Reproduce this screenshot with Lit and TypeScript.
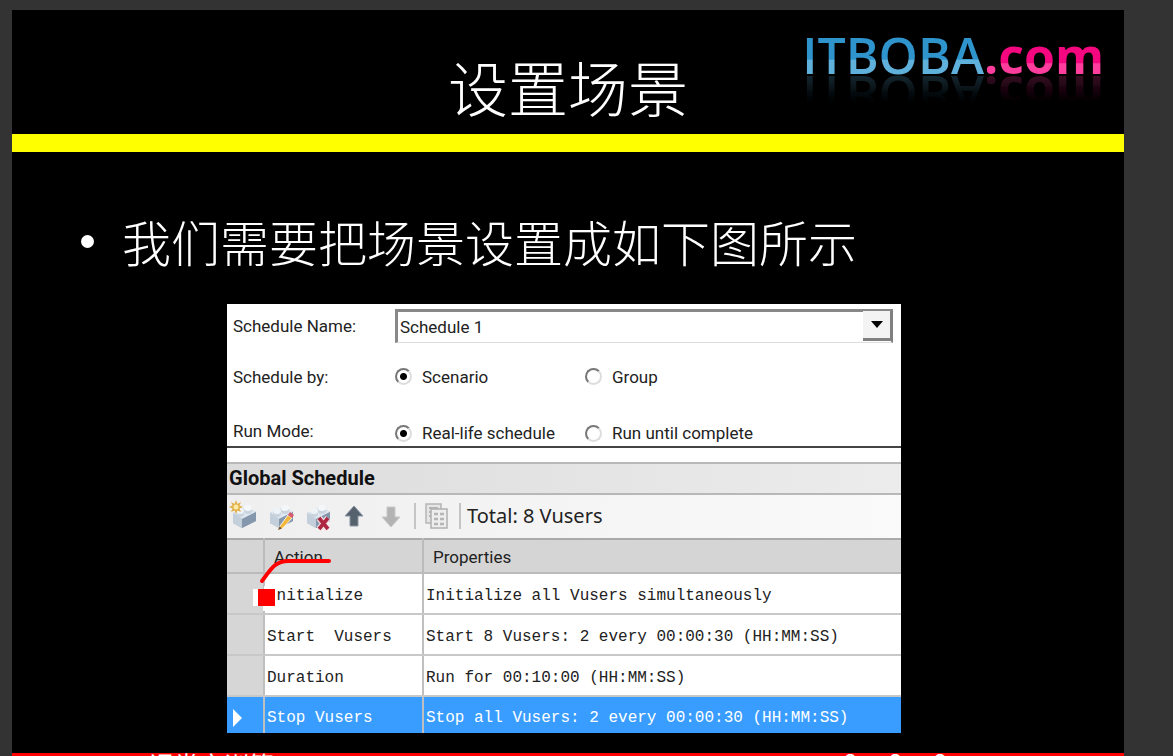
import { LitElement, html, css, svg } from "lit";
import { customElement, state } from "lit/decorators.js";

const block = svg`
  <path d="M4 13 L18 7 L27 12 V21 L13 28 L4 23 Z" fill="#a9b8c8"/>
  <path d="M4 13 L18 7 L27 12 L13 19 Z" fill="#dfe8f0"/>
  <path d="M4 13 L13 19 V28 L4 23 Z" fill="#c3cfdb"/>
  <path d="M13 19 L27 12 V21 L13 28 Z" fill="#8597ad"/>
  <path d="M7 11 V14 A4 3 0 0 0 15 14 V11 M15 8 V11 A4 3 0 0 0 23 11 V8" fill="#c9d4df"/>
  <ellipse cx="11" cy="11" rx="4" ry="3" fill="#eef3f7"/>
  <ellipse cx="19" cy="8" rx="4" ry="3" fill="#f3f7fa"/>`;

const icons = {
  add: svg`${block}
    <path d="M7 0 L8.500 4 L12 2 L10.500 5.500 L14 7 L10.500 8.500 L12 12 L8.500 10.500 L7 14 L5.500 10.500 L2 12 L3.500 8.500 L0 7 L3.500 5.500 L2 2 L5.500 4 Z" fill="#e2b04a"/>
    <circle cx="7" cy="7" r="2.500" fill="#fbe9a8"/>`,
  edit: svg`${block}
    <path d="M14 26 L22 15 L26 18 L17 28 L12 30 Z" fill="#f3b73c" stroke="#fff" stroke-width=".8"/>
    <path d="M22 15 L24 12 L28 15 L26 18 Z" fill="#d6596c"/>
    <path d="M12 30 L13.500 26.500 L16 28.600 Z" fill="#6b4a28"/>`,
  remove: svg`${block}
    <path d="M16 18 L25 29 M25 18 L16 29" stroke="#f2dfe3" stroke-width="6"/>
    <path d="M16 18 L25 29 M25 18 L16 29" stroke="#ad2540" stroke-width="3.600"/>`,
  up: svg`<path d="M14 6 L23 16 H18 V26 H10 V16 H5 Z" fill="#56616e" stroke="#8995a2"/>`,
  down: svg`<path d="M14 27 L23 17 H18 V7 H10 V17 H5 Z" fill="#b3b3b3" stroke="#c8c8c8"/>`,
  copy: svg`
    <rect x="4" y="4" width="15" height="19" fill="#e6e6e6" stroke="#b5b5b5" stroke-width="1.500"/>
    <path d="M7 8 H16 M7 12 H10 M7 16 H10" stroke="#b5b5b5" stroke-width="2"/>
    <rect x="9" y="9" width="16" height="19" fill="#eee" stroke="#b0b0b0" stroke-width="1.500"/>
    <path d="M12 14 H22 M12 19 H22 M12 24 H22" stroke="#b5b5b5" stroke-width="2.500" stroke-dasharray="4 2"/>`,
};

@customElement("app-root")
export class AppRoot extends LitElement {
  @state() private selected = 3;

  private rows = [
    ["Initialize", "Initialize all Vusers simultaneously"],
    ["Start  Vusers", "Start 8 Vusers: 2 every 00:00:30 (HH:MM:SS)"],
    ["Duration", "Run for 00:10:00 (HH:MM:SS)"],
    ["Stop Vusers", "Stop all Vusers: 2 every 00:00:30 (HH:MM:SS)"],
  ];

  static styles = css`
    :host {
      display: block;
      height: 100vh;
      overflow: hidden;
      box-sizing: border-box;
      padding: 10px 49px 0 12px;
      background: #333;
      color: #fff;
      font-family: Roboto, "Liberation Sans", sans-serif;
    }
    * { box-sizing: border-box; }
    .slide { background: #000; }
    .header {
      display: grid;
      grid-template-columns: 1fr auto 1fr;
      height: 142px;
      border-bottom: 18px solid #ff0;
    }
    h1 {
      grid-column: 2;
      margin: 0;
      padding-top: 41px;
      font: 300 60px/70px "Noto Sans CJK SC", sans-serif;
    }
    .logo {
      justify-self: end;
      align-self: start;
      margin: 10px 20px 0 0;
      font: 600 50px/70px "Open Sans", sans-serif;
      -webkit-box-reflect: below -30px linear-gradient(transparent 40%, rgba(255, 255, 255, 0.2) 75%);
    }
    .logo span {
      background: linear-gradient(#2f93cc 56%, #5fb1dc 58%);
      -webkit-background-clip: text;
      color: transparent;
    }
    .logo .tld {
      background: linear-gradient(#f5077f 61%, #ff3d9c 63%);
      -webkit-background-clip: text;
      font-weight: 700;
    }
    .points {
      margin: 0;
      padding: 53px 0 27px 69px;
      list-style: none;
      font: 300 49px/72px "Noto Sans CJK SC", sans-serif;
    }
    .points li { display: flex; align-items: center; gap: 28px; }
    .points li::before {
      content: "";
      width: 13px;
      height: 13px;
      border-radius: 50%;
      background: #fff;
    }
    .body { padding: 0 223px 20px 215px; }
    .panel { position: relative; background: #fff; color: #222; }
    .form {
      display: grid;
      grid-template-columns: 162px 190px 1fr;
      grid-template-rows: 43px 59px 40px;
      align-items: center;
      padding-left: 6px;
      border-bottom: 2px solid #444;
      font-size: 17px;
      line-height: 24px;
    }
    .form > .mode { padding-top: 14px; }
    .form > .caption { padding: 12px 0 2px; }
    .combo { grid-column: 2 / 4; display: grid; margin-right: 8px; }
    .combo > * { grid-area: 1 / 1; }
    select {
      appearance: none;
      width: 100%;
      height: 34px;
      padding: 0 2px;
      border: solid #888;
      border-width: 3px 2px 1px 3px;
      border-bottom-color: #ddd;
      border-radius: 0;
      background: #fff;
      color: #222;
      font: inherit;
    }
    .arrow {
      justify-self: end;
      align-self: center;
      display: grid;
      place-items: center;
      width: 30px;
      height: 30px;
      border: solid #808080;
      border-width: 0 3px 3px 0;
      background: #f3f3f3;
      pointer-events: none;
    }
    .choice { display: flex; align-items: center; gap: 10px; }
    .choice input {
      appearance: none;
      width: 17px;
      height: 17px;
      margin: 0;
      border: 2px solid;
      border-color: #777 #ddd #ddd #777;
      border-radius: 50%;
      background: #fff;
    }
    .choice input:checked { background: radial-gradient(#000 0 3px, #fff 4px); }
    h2 {
      margin: 14px 0 0;
      padding-left: 2px;
      border: solid #b8b8b8;
      border-width: 2px 0;
      background: linear-gradient(90deg, #dcdcdc, #ececec);
      color: #111;
      font-size: 20px;
      line-height: 29px;
    }
    .tools {
      display: flex;
      align-items: center;
      height: 43px;
      padding: 0 0 1px 2px;
      background: linear-gradient(90deg, #efefef, #fafafa);
    }
    .tools button { width: 37px; height: 32px; padding: 0; border: 0; background: none; text-align: left; }
    .tools svg { display: block; }
    .sep { width: 2px; height: 26px; background: #c4c4c4; }
    .sep + button { margin-left: 6px; }
    .total { padding-left: 6px; font: 20px/26px "Noto Sans", sans-serif; }
    table { width: 100%; border-collapse: collapse; table-layout: fixed; border-top: 2px solid #aaa; }
    .c-mark { width: 37px; }
    .c-action { width: 159px; }
    th {
      height: 34px;
      padding: 2px 9px 0;
      border-right: 2px solid #bbb;
      border-bottom: 2px solid #bbb;
      background: #d5d5d5;
      font-size: 17px;
      font-weight: 400;
      text-align: left;
    }
    td {
      height: 41px;
      padding: 4px 0 0 2px;
      border-right: 2px solid #bfbfbf;
      border-bottom: 2px solid #c8c8c8;
      font: 16px/24px "Liberation Mono", monospace;
      white-space: pre;
    }
    th:last-child, td:last-child { border-right: 0; }
    td.mark { padding-left: 6px; background: #d6d6d6; }
    tr.on td { height: 37px; padding-top: 6px; border-bottom: 0; background: #399dff; color: #fff; }
    .mark svg { display: block; }
    .note { position: absolute; left: 25px; top: 250px; }
    .footer {
      display: flex;
      align-items: flex-start;
      justify-content: space-between;
      height: 40px;
      padding: 0 177px 0 137px;
      background: #f00;
      font: 25px/22px "Noto Sans CJK SC", sans-serif;
    }
    .marks { display: flex; gap: 31px; line-height: 16px; }
  `;

  private radio(name: string, label: string, checked = false) {
    return html`<label class="choice ${name}"><input type="radio" name=${name} .checked=${checked} />${label}</label>`;
  }

  private tool(label: string, icon: unknown) {
    return html`<button aria-label=${label}><svg width="32" height="32" viewBox="0 0 32 32" fill="none">${icon}</svg></button>`;
  }

  render() {
    return html`
      <main class="slide">
        <header class="header">
          <h1>设置场景</h1>
          <div class="logo"><span>ITBOBA</span><span class="tld">.com</span></div>
        </header>
        <ul class="points"><li>我们需要把场景设置成如下图所示</li></ul>
        <div class="body">
          <section class="panel">
            <form class="form">
              <label for="name">Schedule Name:</label>
              <div class="combo">
                <select id="name"><option>Schedule 1</option></select>
                <span class="arrow"><svg width="12" height="7"><path d="M0 0H12L6 7Z" /></svg></span>
              </div>
              <span>Schedule by:</span>
              ${this.radio("by", "Scenario", true)} ${this.radio("by", "Group")}
              <span class="caption">Run Mode:</span>
              ${this.radio("mode", "Real-life schedule", true)} ${this.radio("mode", "Run until complete")}
            </form>
            <h2>Global Schedule</h2>
            <div class="tools">
              ${this.tool("Add action", icons.add)}${this.tool("Edit action", icons.edit)}
              ${this.tool("Delete action", icons.remove)}${this.tool("Move up", icons.up)}
              ${this.tool("Move down", icons.down)}
              <span class="sep"></span>
              ${this.tool("Copy", icons.copy)}
              <span class="sep"></span>
              <span class="total">Total: 8 Vusers</span>
            </div>
            <table>
              <colgroup><col class="c-mark" /><col class="c-action" /><col /></colgroup>
              <thead><tr><th></th><th>Action</th><th>Properties</th></tr></thead>
              <tbody>
                ${this.rows.map(
                  ([action, props], i) => html`<tr class=${i === this.selected ? "on" : ""} @click=${() => (this.selected = i)}>
                    <td class="mark">${i === this.selected ? html`<svg width="10" height="18"><path d="M0 0L9 9L0 18Z" fill="#fff" /></svg>` : ""}</td><td>${action}</td><td>${props}</td>
                  </tr>`
                )}
              </tbody>
            </table>
            <svg class="note" width="82" height="64" fill="none">
              <path d="M1 35H12V32H25V57H11V52H1Z" fill="#fff" />
              <rect x="6" y="35" width="17" height="17" fill="#f00" />
              <path d="M10 27C18 17 22 7 36 7H77" stroke="#f00" stroke-width="4" stroke-linecap="round" />
            </svg>
          </section>
        </div>
        <footer class="footer">
          <span>课堂实训篇</span>
          <span class="marks"><span>8</span><span>8</span><span>8</span></span>
        </footer>
      </main>
    `;
  }
}
